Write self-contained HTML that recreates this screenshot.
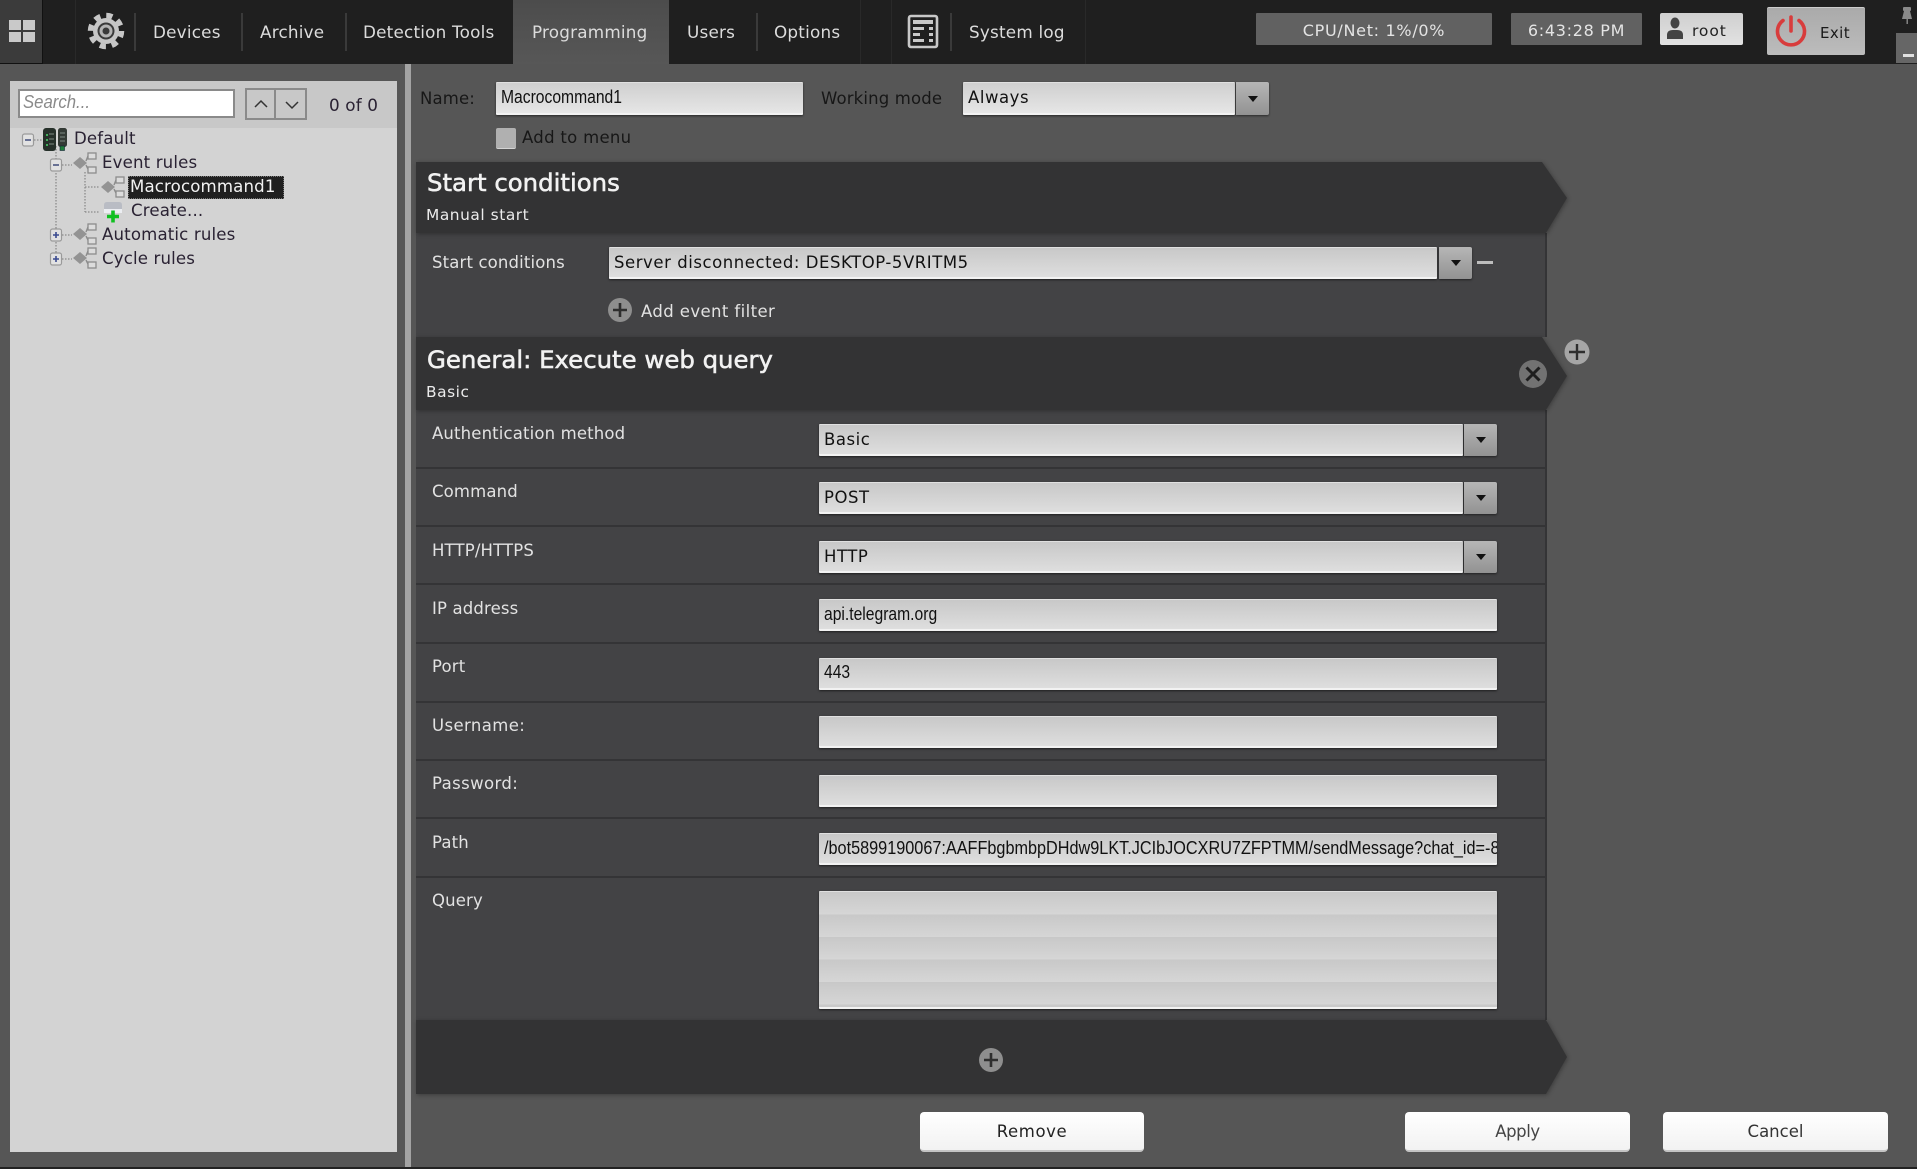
<!DOCTYPE html>
<html><head><meta charset="utf-8"><title>Programming</title>
<style>
html,body{margin:0;padding:0;width:1917px;height:1169px;overflow:hidden;background:#565656}
body{position:relative;font-family:"DejaVu Sans",sans-serif}
.a{position:absolute}
.t{position:absolute;white-space:nowrap;font:16.5px/24px "DejaVu Sans",sans-serif;color:#e2e2e2;letter-spacing:.15px}
.n{font-size:16.8px;color:#dcdcdc;letter-spacing:.22px}
.k{color:#1e1e1e}
.h{font-size:24.4px;line-height:30px;color:#f2f2f2;-webkit-text-stroke:.55px #f2f2f2;letter-spacing:0}
.i{position:absolute;box-sizing:border-box;overflow:hidden;white-space:nowrap;background:linear-gradient(#c8c8c8,#dedede);border-top:1px solid #e0e0e0;border-bottom:2px solid #f2f2f2;box-shadow:0 1px 2px rgba(0,0,0,.55);border-radius:1px;color:#111;padding-left:5px;font:16.5px/30px "DejaVu Sans",sans-serif;letter-spacing:.55px}
.i span{display:inline-block;font:18px/28px "Liberation Sans",sans-serif;letter-spacing:0;transform:scaleX(.87);transform-origin:0 50%}
.d{position:absolute;box-sizing:border-box;background:linear-gradient(#b6b6b6,#929292);border-radius:0 2px 2px 0;box-shadow:0 1px 2px rgba(0,0,0,.5)}
.d:after{content:"";position:absolute;left:50%;top:50%;margin:-3px 0 0 -5px;border:5px solid transparent;border-top:6px solid #111;border-bottom:0}
.s{position:absolute;left:416px;width:1130px;height:2px;background:#343436}
.b{position:absolute;box-sizing:border-box;background:linear-gradient(#ffffff,#f2f2f2);border-radius:4px;border-bottom:2px solid #c4c4c4;color:#222;text-align:center;font:16.5px/40px "DejaVu Sans",sans-serif}
.tr{font-size:16.6px;color:#2a2233}
</style></head><body>

<!-- header -->
<div class="a" style="left:0;top:0;width:1917px;height:64px;background:#1f1f1f"></div>
<div class="a" style="left:0;top:0;width:42px;height:63px;background:#3b3b3b;border-right:1px solid #111;border-bottom:1px solid #111"></div>
<div class="a" style="left:513px;top:0;width:156px;height:64px;background:linear-gradient(#4c4c4c,#575757)"></div>
<div class="a" style="left:0;top:64px;width:1917px;height:1105px;background:#565656"></div>

<!-- left panel -->
<div class="a" style="left:10px;top:81px;width:387px;height:1071px;background:#d3d3d3"></div>
<div class="a" style="left:10px;top:81px;width:387px;height:47px;background:#c8c8c8"></div>
<div class="a" style="left:405px;top:64px;width:6px;height:1105px;background:#a3a3a3"></div>
<div class="a" style="left:0;top:1167px;width:1917px;height:2px;background:#222"></div>

<!-- search -->
<div class="a" style="left:18px;top:89px;width:217px;height:29px;box-sizing:border-box;background:#fff;border:2px solid #8a8a8a;overflow:hidden">
  <span style="display:inline-block;font:italic 18px/23px 'Liberation Sans',sans-serif;color:#8a8a8a;margin-left:3px;transform:scaleX(.93);transform-origin:0 50%">Search...</span>
</div>
<div class="a" style="left:245px;top:88px;width:31px;height:32px;box-sizing:border-box;border:2px solid #8a8a8a;background:#c8c8c8"></div>
<div class="a" style="left:276px;top:88px;width:31px;height:32px;box-sizing:border-box;border:2px solid #8a8a8a;border-left:0;background:#c8c8c8"></div>
<div class="t" style="left:329px;top:93px;font-size:16.8px;color:#2a2233">0 of 0</div>

<!-- tree -->
<div class="a" style="left:128px;top:176px;width:156px;height:23px;box-sizing:border-box;background:#202020;border:1px dotted #777"></div>
<div class="t tr" style="left:74px;top:127px">Default</div>
<div class="t tr" style="left:102px;top:151px">Event rules</div>
<div class="t tr" style="left:130px;top:175px;color:#f2f2f2">Macrocommand1</div>
<div class="t tr" style="left:131px;top:199px">Create...</div>
<div class="t tr" style="left:102px;top:223px">Automatic rules</div>
<div class="t tr" style="left:102px;top:247px">Cycle rules</div>

<!-- main top -->
<div class="t k" style="left:420px;top:87px;color:#171717">Name:</div>
<div class="i" style="left:496px;top:82px;width:307px;height:33px;background:linear-gradient(#cfcfcf,#e6e6e6)"><span>Macrocommand1</span></div>
<div class="t k" style="left:821px;top:87px;color:#171717">Working mode</div>
<div class="i" style="left:963px;top:82px;width:272px;height:33px;background:linear-gradient(#cfcfcf,#e6e6e6)">Always</div>
<div class="d" style="left:1236px;top:82px;width:33px;height:33px"></div>
<div class="a" style="left:496px;top:128px;width:20px;height:21px;background:#b0b0b0;border-radius:2px;border-bottom:1px solid #d4d4d4;box-sizing:border-box"></div>
<div class="t" style="left:522px;top:126px;color:#171717;letter-spacing:.3px">Add to menu</div>

<!-- panels -->
<svg class="a" style="left:0;top:0" width="1917" height="1169" viewBox="0 0 1917 1169">
  <rect x="416" y="233" width="1130" height="104" fill="#434345"/>
  <rect x="416" y="410" width="1130" height="610" fill="#434345"/>
  <rect x="1545" y="233" width="2" height="104" fill="#343436"/>
  <rect x="1545" y="410" width="2" height="610" fill="#343436"/>
  <g fill="#333334" style="filter:drop-shadow(1px 1px 2px rgba(0,0,0,.3))">
    <polygon points="416,162 1542,162 1567,198 1546,233 416,233"/>
    <polygon points="416,337 1542,337 1567,376 1546,410 416,410"/>
    <polygon points="416,1020 1546,1020 1567,1057 1546,1094 416,1094"/>
  </g>
</svg>

<div class="t h" style="left:427px;top:168px">Start conditions</div>
<div class="t" style="left:426px;top:203px;font-size:15.4px;color:#ececec;letter-spacing:.55px">Manual start</div>
<div class="t" style="left:432px;top:251px">Start conditions</div>
<div class="i" style="left:609px;top:247px;width:828px;height:32px">Server disconnected: DESKTOP-5VRITM5</div>
<div class="d" style="left:1439px;top:247px;width:33px;height:32px"></div>
<div class="a" style="left:1477px;top:261px;width:16px;height:3px;background:#bdbdbd"></div>
<div class="t" style="left:641px;top:300px;letter-spacing:.4px">Add event filter</div>

<div class="t h" style="left:427px;top:345px">General: Execute web query</div>
<div class="t" style="left:426px;top:380px;font-size:15.4px;color:#ececec;letter-spacing:.55px">Basic</div>

<div class="s" style="top:467px"></div>
<div class="s" style="top:525px"></div>
<div class="s" style="top:583px"></div>
<div class="s" style="top:642px"></div>
<div class="s" style="top:701px"></div>
<div class="s" style="top:759px"></div>
<div class="s" style="top:817px"></div>
<div class="s" style="top:876px"></div>

<div class="t" style="left:432px;top:422px">Authentication method</div>
<div class="t" style="left:432px;top:480px">Command</div>
<div class="t" style="left:432px;top:539px">HTTP/HTTPS</div>
<div class="t" style="left:432px;top:597px">IP address</div>
<div class="t" style="left:432px;top:655px">Port</div>
<div class="t" style="left:432px;top:714px;letter-spacing:.4px">Username:</div>
<div class="t" style="left:432px;top:772px;letter-spacing:.4px">Password:</div>
<div class="t" style="left:432px;top:831px">Path</div>
<div class="t" style="left:432px;top:889px">Query</div>

<div class="i" style="left:819px;top:424px;width:644px;height:32px">Basic</div>
<div class="d" style="left:1464px;top:424px;width:33px;height:32px"></div>
<div class="i" style="left:819px;top:482px;width:644px;height:32px">POST</div>
<div class="d" style="left:1464px;top:482px;width:33px;height:32px"></div>
<div class="i" style="left:819px;top:541px;width:644px;height:32px">HTTP</div>
<div class="d" style="left:1464px;top:541px;width:33px;height:32px"></div>
<div class="i" style="left:819px;top:599px;width:678px;height:32px"><span>api.telegram.org</span></div>
<div class="i" style="left:819px;top:658px;width:678px;height:32px"><span style="position:relative;top:-1px">443</span></div>
<div class="i" style="left:819px;top:716px;width:678px;height:32px"></div>
<div class="i" style="left:819px;top:775px;width:678px;height:32px"></div>
<div class="i" style="left:819px;top:833px;width:678px;height:32px"><span style="transform:scaleX(.902)">/bot5899190067:AAFFbgbmbpDHdw9LKT.JCIbJOCXRU7ZFPTMM/sendMessage?chat_id=-8</span></div>
<div class="i" style="left:819px;top:891px;width:678px;height:118px;background:repeating-linear-gradient(#c8c8c8 0,#d6d6d6 22.5px)"></div>

<div class="b" style="left:920px;top:1112px;width:224px;height:40px;letter-spacing:.6px">Remove</div>
<div class="b" style="left:1405px;top:1112px;width:225px;height:40px;color:#444;letter-spacing:-.4px">Apply</div>
<div class="b" style="left:1663px;top:1112px;width:225px;height:40px;color:#333">Cancel</div>

<!-- nav text -->
<div class="t n" style="left:153px;top:20px">Devices</div>
<div class="t n" style="left:260px;top:20px">Archive</div>
<div class="t n" style="left:363px;top:20px">Detection Tools</div>
<div class="t n" style="left:532px;top:20px">Programming</div>
<div class="t n" style="left:687px;top:20px">Users</div>
<div class="t n" style="left:774px;top:20px">Options</div>
<div class="t n" style="left:969px;top:20px">System log</div>

<div class="a" style="left:1256px;top:13px;width:236px;height:32px;background:#616161;border-radius:1px;color:#e4e4e4;text-align:center;font:16px/35px 'DejaVu Sans',sans-serif;letter-spacing:.7px">CPU/Net: 1%/0%</div>
<div class="a" style="left:1511px;top:13px;width:131px;height:32px;background:#616161;border-radius:1px;color:#e4e4e4;text-align:center;font:16px/35px 'DejaVu Sans',sans-serif;letter-spacing:.7px">6:43:28 PM</div>
<div class="a" style="left:1660px;top:13px;width:83px;height:32px;background:linear-gradient(#cfcfcf,#e2e2e2);border-radius:2px"></div>
<div class="t" style="left:1692px;top:19px;font-size:15.5px;color:#222;letter-spacing:.9px">root</div>
<div class="a" style="left:1767px;top:7px;width:98px;height:48px;background:linear-gradient(#aaaaaa,#bcbcbc);border-radius:2px;border-top:1px solid #ccc;box-sizing:border-box"></div>
<div class="t" style="left:1820px;top:21px;font-size:15px;color:#1a1a1a;letter-spacing:.4px">Exit</div>
<div class="a" style="left:1896px;top:33px;width:21px;height:30px;background:#666"></div>

<!-- icons -->
<svg class="a" style="left:0;top:0" width="1917" height="1169" viewBox="0 0 1917 1169">
  <defs>
    <g id="rule">
      <path d="M6 -2 L8 -7 M6 2 L8 6" stroke="#8c8c8c" stroke-width="1.4" fill="none"/>
      <polygon points="-7,0 0,-6 7,0 0,6" fill="#939393"/>
      <rect x="8" y="-10" width="8" height="6" fill="#dcdcdc" stroke="#8c8c8c" stroke-width="1.3"/>
      <rect x="8" y="4" width="8" height="6" fill="#dcdcdc" stroke="#8c8c8c" stroke-width="1.3"/>
    </g>
    <g id="bx">
      <rect x="-5.5" y="-6" width="11" height="12" rx="2" fill="#e2e2e2" stroke="#9a9a9a" stroke-width="1.2"/>
      <path d="M-3 0H3" stroke="#4a5580" stroke-width="1.6"/>
    </g>
    <g id="bp">
      <rect x="-5.5" y="-6" width="11" height="12" rx="2" fill="#e2e2e2" stroke="#9a9a9a" stroke-width="1.2"/>
      <path d="M-3 0H3M0 -3V3" stroke="#3a4a90" stroke-width="1.6"/>
    </g>
    <g id="plus">
      <circle r="12" fill="#8e8e8e"/>
      <path d="M-7 0H7M0 -7V7" stroke="#2e2e2e" stroke-width="2.6"/>
    </g>
  </defs>

  <!-- windows tile -->
  <g fill="#c9c9c9">
    <rect x="9" y="20" width="12" height="10"/><rect x="23" y="20" width="12" height="10"/>
    <rect x="9" y="32" width="12" height="10"/><rect x="23" y="32" width="12" height="10"/>
  </g>

  <!-- gear -->
  <g transform="translate(106,31)">
    <circle r="15.5" fill="none" stroke="#c6c6c6" stroke-width="5.5" stroke-dasharray="6.2 6"/>
    <circle r="13" fill="#c6c6c6"/>
    <circle r="8.5" fill="#3a3a3a"/>
    <circle r="6.5" fill="#b4b4b4"/>
    <circle r="3.5" fill="#3a3a3a"/>
  </g>

  <!-- nav separators -->
  <g fill="#3a3a3a">
    <rect x="134" y="13" width="2" height="38"/><rect x="241" y="13" width="2" height="38"/>
    <rect x="345" y="13" width="2" height="38"/><rect x="756" y="13" width="2" height="38"/>
    <rect x="950" y="13" width="2" height="38"/>
  </g>
  <g fill="#292929">
    <rect x="75" y="0" width="1" height="64"/><rect x="860" y="0" width="1" height="64"/>
    <rect x="891" y="0" width="1" height="64"/><rect x="1085" y="0" width="1" height="64"/>
  </g>

  <!-- log icon -->
  <g>
    <rect x="909" y="16" width="28" height="31" rx="2" fill="#1f1f1f" stroke="#c8c8c8" stroke-width="2.6"/>
    <g fill="#c8c8c8">
      <rect x="913" y="20" width="20" height="4"/>
      <rect x="913" y="27" width="11" height="3"/><rect x="929" y="27" width="4" height="3"/>
      <rect x="913" y="33" width="7" height="3"/><rect x="929" y="33" width="4" height="3"/>
      <rect x="913" y="39" width="11" height="3"/><rect x="929" y="39" width="4" height="3"/>
    </g>
  </g>

  <!-- person -->
  <g fill="#444">
    <ellipse cx="1675" cy="23" rx="4.5" ry="5.5"/>
    <path d="M1667 39 V35 Q1667 30 1673 30 H1677 Q1683 30 1683 35 V39 Z"/>
  </g>

  <!-- power -->
  <g fill="none" stroke="#d83c3c" stroke-width="3.6" stroke-linecap="round">
    <path d="M1783 20.5 A13.5 13.5 0 1 0 1799 20.5"/>
    <path d="M1791 17 V31"/>
  </g>

  <!-- pin -->
  <g fill="#8a8a8a">
    <rect x="1903" y="7" width="8" height="4" rx="1"/>
    <path d="M1904 11 H1910 L1912 19 H1902 Z"/>
    <rect x="1906.5" y="19" width="1.4" height="5"/>
  </g>
  <rect x="1903" y="54" width="11" height="3" fill="#e0e0e0"/>

  <!-- search arrows -->
  <path d="M255 107 L261 101 L267 107" fill="none" stroke="#333" stroke-width="1.5"/>
  <path d="M286 102 L292 108 L298 102" fill="none" stroke="#333" stroke-width="1.5"/>

  <!-- tree dotted lines -->
  <g stroke="#8a8a8a" stroke-width="1.3" stroke-dasharray="1.5 1.5" fill="none">
    <path d="M56 146 V254"/>
    <path d="M34 140 H43"/>
    <path d="M62 165 H72"/><path d="M62 235 H72"/><path d="M62 259 H72"/>
    <path d="M85 172 V212"/>
    <path d="M85 187 H100"/><path d="M85 212 H100"/>
  </g>

  <use href="#bx" x="28" y="140"/>
  <use href="#bx" x="56" y="165"/>
  <use href="#bp" x="56" y="235"/>
  <use href="#bp" x="56" y="259"/>
  <use href="#rule" x="80" y="163"/>
  <use href="#rule" x="108" y="187"/>
  <use href="#rule" x="80" y="234"/>
  <use href="#rule" x="80" y="258"/>

  <!-- server -->
  <rect x="43" y="128" width="13" height="23" rx="3" fill="#26302a"/>
  <rect x="58" y="128" width="9" height="19" rx="2.5" fill="#333a35"/>
  <g fill="#3fae5a">
    <rect x="46" y="134" width="2" height="2"/><rect x="46" y="139" width="2" height="2"/><rect x="46" y="144" width="2" height="2"/>
  </g>
  <g stroke="#7d8a82" stroke-width="1"><path d="M49 134H54M49 139H54M49 144H54M60 133H65M60 137H65M60 141H65"/></g>
  <rect x="60" y="146" width="4.5" height="4.5" fill="#1f7d3a" stroke="#123" stroke-width=".6"/>

  <!-- create icon -->
  <path d="M104 205 Q104 202 107 202 H119 Q122 202 122 205 V209 H104 Z" fill="#b9bcc4"/>
  <rect x="104" y="209" width="18" height="4" fill="#eceef2"/>
  <path d="M107 216.5H119M113 210.5V222.5" stroke="#10c020" stroke-width="3.6"/>

  <!-- panel plus/x -->
  <use href="#plus" x="620" y="310"/>
  <g transform="translate(1577,352)">
    <circle r="12.5" fill="#a6a6a6"/>
    <path d="M-8 0H8M0 -8V8" stroke="#2e2e2e" stroke-width="2.4"/>
  </g>
  <g transform="translate(1533,374)">
    <circle r="14" fill="#727272"/>
    <path d="M-6.5 -6.5L6.5 6.5M6.5 -6.5L-6.5 6.5" stroke="#1e1e1e" stroke-width="3"/>
  </g>
  <use href="#plus" x="991" y="1060"/>
</svg>
</body></html>
